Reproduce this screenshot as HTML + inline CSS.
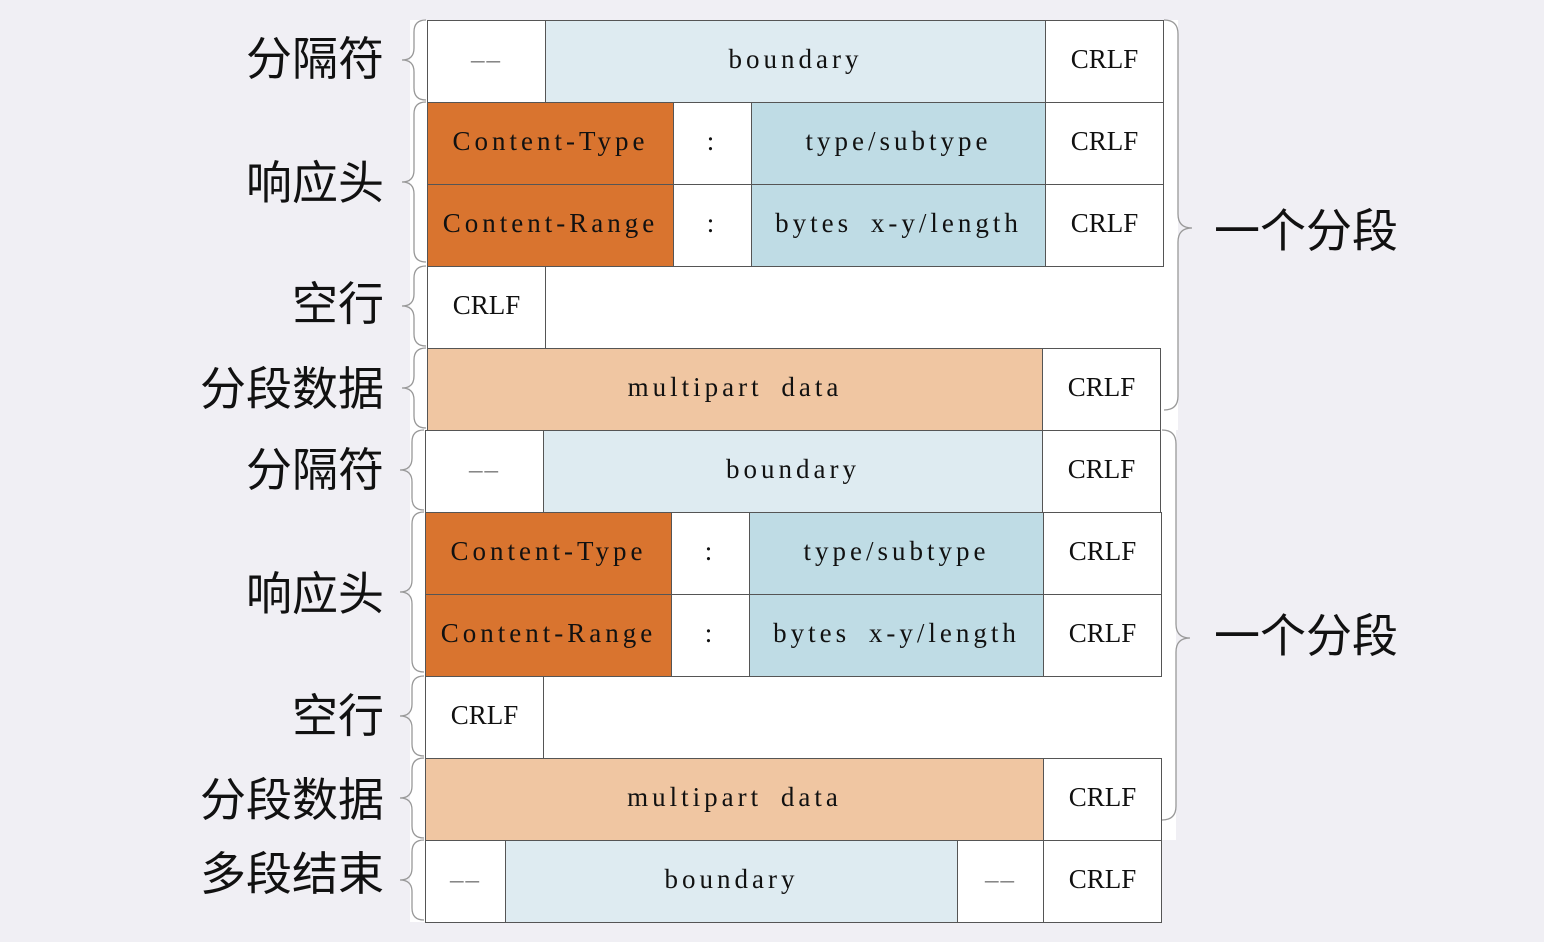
<!DOCTYPE html>
<html><head><meta charset="utf-8"><style>
body{margin:0;width:1544px;height:942px;background:#f0eff4;position:relative;overflow:hidden;font-family:"Liberation Serif",serif}
.c{position:absolute;box-sizing:border-box;border:1px solid #555;display:flex;align-items:center;justify-content:center;font-size:27px;letter-spacing:4px;word-spacing:8px;color:#111;background:#fff;padding-top:0;padding-bottom:4px}
.k{letter-spacing:0}
.d{color:#777;letter-spacing:2px}
.lb{background:#deebf1}.bl{background:#bfdce5}.or{background:#d9742f}.pe{background:#f0c6a2}
.l{position:absolute;right:1160px;font-family:"Liberation Sans","Noto Sans CJK SC",sans-serif;font-size:46px;color:#111;line-height:1}
.r{position:absolute;left:1214px;font-family:"Liberation Sans","Noto Sans CJK SC",sans-serif;font-size:46px;color:#111;line-height:1}
.w{position:absolute;background:#fff}
</style></head><body>
<div class="w" style="left:410px;top:20px;width:768px;height:410px"></div>
<div class="w" style="left:410px;top:430px;width:766px;height:410px"></div>
<div class="w" style="left:410px;top:840px;width:751px;height:82px"></div>

<div class="c d" style="left:427px;top:20px;width:119px;height:83px">––</div>
<div class="c lb" style="left:545px;top:20px;width:501px;height:83px">boundary</div>
<div class="c k" style="left:1045px;top:20px;width:119px;height:83px">CRLF</div>
<div class="c or" style="left:427px;top:102px;width:247px;height:83px">Content-Type</div>
<div class="c" style="left:673px;top:102px;width:79px;height:83px">:</div>
<div class="c bl" style="left:751px;top:102px;width:295px;height:83px">type/subtype</div>
<div class="c k" style="left:1045px;top:102px;width:119px;height:83px">CRLF</div>
<div class="c or" style="left:427px;top:184px;width:247px;height:83px">Content-Range</div>
<div class="c" style="left:673px;top:184px;width:79px;height:83px">:</div>
<div class="c bl" style="left:751px;top:184px;width:295px;height:83px">bytes x-y/length</div>
<div class="c k" style="left:1045px;top:184px;width:119px;height:83px">CRLF</div>
<div class="c k" style="left:427px;top:266px;width:119px;height:83px">CRLF</div>
<div class="c pe" style="left:427px;top:348px;width:616px;height:83px">multipart data</div>
<div class="c k" style="left:1042px;top:348px;width:119px;height:83px">CRLF</div>

<div class="c d" style="left:425px;top:430px;width:119px;height:83px">––</div>
<div class="c lb" style="left:543px;top:430px;width:500px;height:83px">boundary</div>
<div class="c k" style="left:1042px;top:430px;width:119px;height:83px">CRLF</div>
<div class="c or" style="left:425px;top:512px;width:247px;height:83px">Content-Type</div>
<div class="c" style="left:671px;top:512px;width:79px;height:83px">:</div>
<div class="c bl" style="left:749px;top:512px;width:295px;height:83px">type/subtype</div>
<div class="c k" style="left:1043px;top:512px;width:119px;height:83px">CRLF</div>
<div class="c or" style="left:425px;top:594px;width:247px;height:83px">Content-Range</div>
<div class="c" style="left:671px;top:594px;width:79px;height:83px">:</div>
<div class="c bl" style="left:749px;top:594px;width:295px;height:83px">bytes x-y/length</div>
<div class="c k" style="left:1043px;top:594px;width:119px;height:83px">CRLF</div>
<div class="c k" style="left:425px;top:676px;width:119px;height:83px">CRLF</div>
<div class="c pe" style="left:425px;top:758px;width:619px;height:83px">multipart data</div>
<div class="c k" style="left:1043px;top:758px;width:119px;height:83px">CRLF</div>
<div class="c d" style="left:425px;top:840px;width:81px;height:83px">––</div>
<div class="c lb" style="left:505px;top:840px;width:453px;height:83px">boundary</div>
<div class="c d" style="left:957px;top:840px;width:87px;height:83px">––</div>
<div class="c k" style="left:1043px;top:840px;width:119px;height:83px">CRLF</div>

<svg style="position:absolute;left:0;top:0" width="1544" height="942" fill="none" stroke="#999" stroke-width="1.3">
<path d="M426 20 q-12 0 -12 12 v16 q0 12 -12 12 q12 0 12 12 v16 q0 12 12 12"/>
<path d="M426 102 q-12 0 -12 12 v56 q0 12 -12 12 q12 0 12 12 v56 q0 12 12 12"/>
<path d="M426 266 q-12 0 -12 12 v16 q0 12 -12 12 q12 0 12 12 v16 q0 12 12 12"/>
<path d="M426 348 q-12 0 -12 12 v16 q0 12 -12 12 q12 0 12 12 v16 q0 12 12 12"/>
<path d="M424 430 q-12 0 -12 12 v16 q0 12 -12 12 q12 0 12 12 v16 q0 12 12 12"/>
<path d="M424 512 q-12 0 -12 12 v56 q0 12 -12 12 q12 0 12 12 v56 q0 12 12 12"/>
<path d="M424 676 q-12 0 -12 12 v16 q0 12 -12 12 q12 0 12 12 v16 q0 12 12 12"/>
<path d="M424 758 q-12 0 -12 12 v16 q0 12 -12 12 q12 0 12 12 v16 q0 12 12 12"/>
<path d="M424 840 q-12 0 -12 12 v16 q0 12 -12 12 q12 0 12 12 v16 q0 12 12 12"/>
<path d="M1164 20 q14 0 14 14 v180 q0 14 14 14 q-14 0 -14 14 v154 q0 14 -14 14"/>
<path d="M1162 430 q14 0 14 14 v180 q0 14 14 14 q-14 0 -14 14 v154 q0 14 -14 14"/>
</svg>

<div class="l" style="top:36px">分隔符</div>
<div class="l" style="top:160px">响应头</div>
<div class="l" style="top:281px">空行</div>
<div class="l" style="top:366px">分段数据</div>
<div class="l" style="top:447px">分隔符</div>
<div class="l" style="top:571px">响应头</div>
<div class="l" style="top:693px">空行</div>
<div class="l" style="top:777px">分段数据</div>
<div class="l" style="top:851px">多段结束</div>
<div class="r" style="top:208px">一个分段</div>
<div class="r" style="top:613px">一个分段</div>
</body></html>
